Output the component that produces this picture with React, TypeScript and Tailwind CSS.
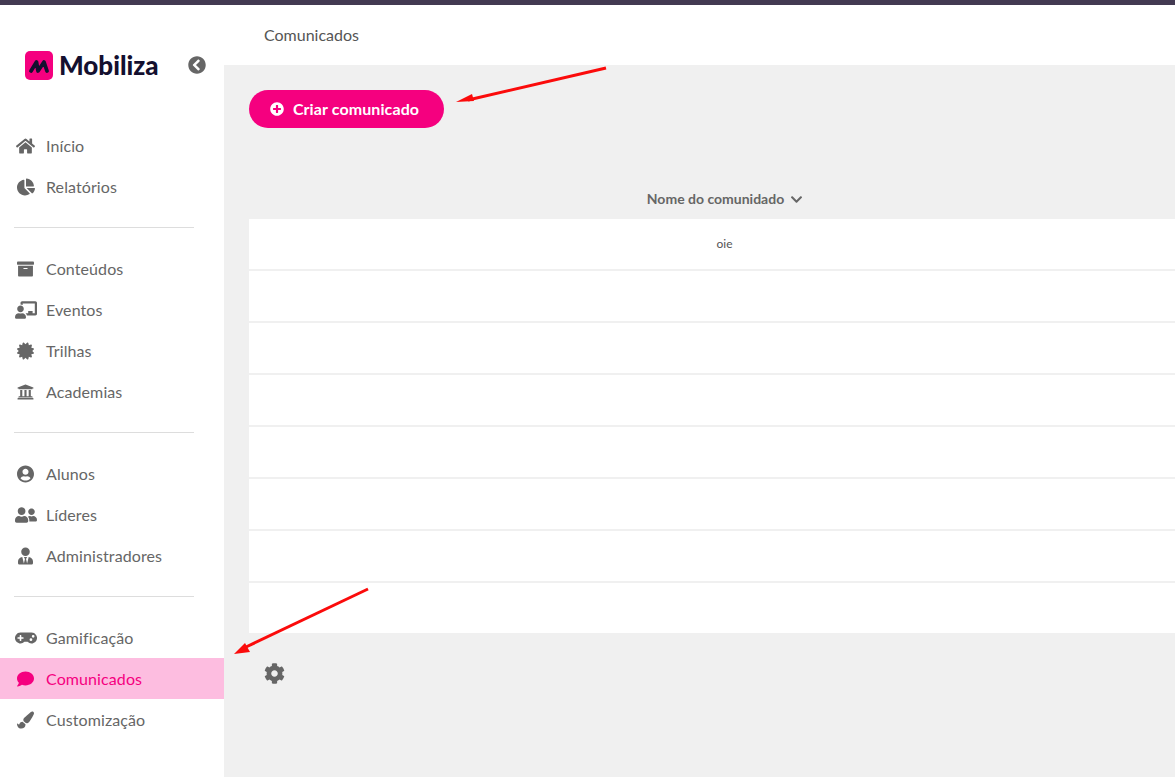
import type { IconType } from "react-icons";
import {
  FaArchive,
  FaCertificate,
  FaChalkboardTeacher,
  FaChartPie,
  FaChevronCircleLeft,
  FaChevronDown,
  FaCog,
  FaComment,
  FaGamepad,
  FaHome,
  FaPaintBrush,
  FaPlusCircle,
  FaUniversity,
  FaUserCircle,
  FaUserFriends,
  FaUserTie,
} from "react-icons/fa";

type NavItem = {
  label: string;
  icon: IconType;
  iconWidth: string;
  active?: boolean;
};

const navGroups: NavItem[][] = [
  [
    { label: "Início", icon: FaHome, iconWidth: "w-[19px]" },
    { label: "Relatórios", icon: FaChartPie, iconWidth: "w-[18px]" },
  ],
  [
    { label: "Conteúdos", icon: FaArchive, iconWidth: "w-[17px]" },
    { label: "Eventos", icon: FaChalkboardTeacher, iconWidth: "w-[22px]" },
    { label: "Trilhas", icon: FaCertificate, iconWidth: "w-[17px]" },
    { label: "Academias", icon: FaUniversity, iconWidth: "w-[17px]" },
  ],
  [
    { label: "Alunos", icon: FaUserCircle, iconWidth: "w-[17px]" },
    { label: "Líderes", icon: FaUserFriends, iconWidth: "w-[22px]" },
    { label: "Administradores", icon: FaUserTie, iconWidth: "w-[15px]" },
  ],
  [
    { label: "Gamificação", icon: FaGamepad, iconWidth: "w-[22px]" },
    { label: "Comunicados", icon: FaComment, iconWidth: "w-[17px]", active: true },
    { label: "Customização", icon: FaPaintBrush, iconWidth: "w-[17px]" },
  ],
];

const rows = ["oie", "", "", "", "", "", "", ""];

function Logo() {
  return (
    <div className="flex w-[134px] shrink-0 items-center gap-[6px]">
      <svg width="28" height="29" viewBox="0 0 28 29" className="shrink-0">
        <rect width="28" height="29" rx="5" fill="#f5007f" />
        <path
          d="M6 20 L11.5 11 L13 20 L19 11 L22 20"
          fill="none"
          stroke="#14102f"
          strokeWidth="3.8"
          strokeLinecap="round"
          strokeLinejoin="round"
        />
      </svg>
      <span className="text-[26px] leading-none font-black text-[#14102f]">
        Mobiliza
      </span>
    </div>
  );
}

function Sidebar() {
  return (
    <aside className="flex w-[224px] shrink-0 flex-col bg-white">
      <div className="flex h-[116px] items-center pt-[4px] pl-[25px]">
        <Logo />
        <FaChevronCircleLeft className="ml-[29px] h-[18px] w-[18px] text-[#666666]" />
      </div>
      <nav className="pt-[4px]">
        {navGroups.map((group, index) => (
          <div key={group[0].label}>
            {index > 0 && (
              <div className="mt-[20px] mb-[20px] ml-[14px] h-px w-[180px] bg-[#dddddd]" />
            )}
            {group.map((item) => (
              <a
                key={item.label}
                href="#"
                className={`flex h-[41px] items-center text-base tracking-[0.1px] ${
                  item.active
                    ? "bg-[#fdbde0] text-[#f5007f]"
                    : "text-[#666666]"
                }`}
              >
                <span className="flex w-[46px] justify-center pl-[5px]">
                  <item.icon className={`h-[18px] ${item.iconWidth}`} />
                </span>
                {item.label}
              </a>
            ))}
          </div>
        ))}
      </nav>
    </aside>
  );
}

export default function App() {
  return (
    <div className="relative flex h-[777px] w-[1175px] flex-col overflow-hidden bg-white font-['Lato',sans-serif]">
      <div className="h-[5px] shrink-0 bg-[#433a52]" />
      <div className="flex min-h-0 flex-1">
        <Sidebar />
        <main className="flex min-w-0 flex-1 flex-col">
          <header className="flex h-[60px] shrink-0 items-center bg-white pb-[1px] pl-[40px] text-base text-[#555555]">
            Comunicados
          </header>
          <div className="min-h-0 flex-1 overflow-hidden bg-[#f0f0f0] pt-[25px] pl-[25px]">
            <button className="flex h-[38px] w-[195px] items-center justify-center gap-[9px] rounded-full bg-[#f5007f] pr-[4px] text-base font-bold tracking-[0.1px] text-white">
              <FaPlusCircle className="text-[14px]" />
              Criar comunicado
            </button>
            <div className="mt-[61px] w-[951px]">
              <div className="mb-[10px] flex items-center justify-center gap-[6px] pl-px text-sm font-bold text-[#666666]">
                Nome do comunidado
                <FaChevronDown className="text-[13px]" />
              </div>
              {rows.map((row, index) => (
                <div
                  key={index}
                  className="flex h-[52px] items-center justify-center border-b-2 border-[#f0f0f0] bg-white text-xs text-[#555555] last:h-[50px] last:border-b-0"
                >
                  {row}
                </div>
              ))}
            </div>
            <FaCog className="mt-[30px] ml-[15px] text-[21px] text-[#666666]" />
          </div>
        </main>
      </div>
      <svg
        className="pointer-events-none absolute top-0 left-0"
        width="1175"
        height="777"
        viewBox="0 0 1175 777"
      >
        <path d="M606 68 L468 100" stroke="#fb0b0b" strokeWidth="3" fill="none" />
        <polygon points="456,102 472,94 474,101" fill="#fb0b0b" />
        <path d="M368 589 L246 647" stroke="#fb0b0b" strokeWidth="3" fill="none" />
        <polygon points="234,654 245,643 250,652" fill="#fb0b0b" />
      </svg>
    </div>
  );
}
